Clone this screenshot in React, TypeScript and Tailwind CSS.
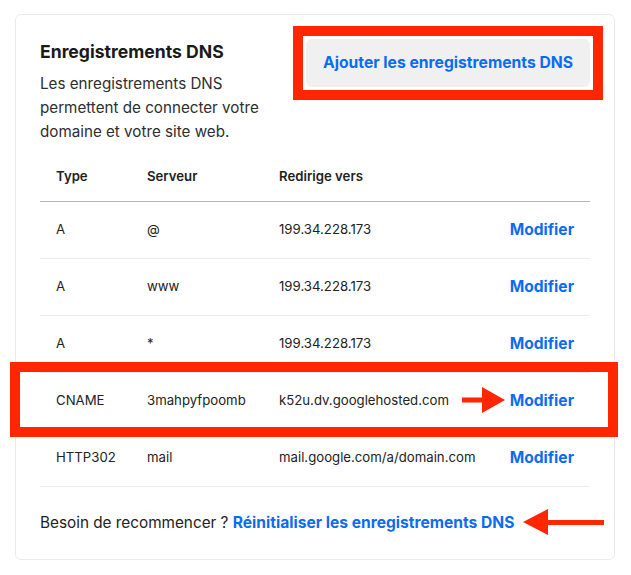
import React from "react";

const rows = [
  { type: "A", server: "@", target: "199.34.228.173" },
  { type: "A", server: "www", target: "199.34.228.173" },
  { type: "A", server: "*", target: "199.34.228.173" },
  { type: "CNAME", server: "3mahpyfpoomb", target: "k52u.dv.googlehosted.com" },
  { type: "HTTP302", server: "mail", target: "mail.google.com/a/domain.com" },
];

function ArrowRight() {
  return (
    <svg className="absolute left-[461px] top-[386px]" width="46" height="28" viewBox="0 0 46 28">
      <rect x="1" y="11.5" width="22" height="5" fill="#ff2600" />
      <polygon points="21,1 44,14 21,27" fill="#ff2600" />
    </svg>
  );
}

function ArrowLeft() {
  return (
    <svg className="absolute left-[522px] top-[508px]" width="84" height="28" viewBox="0 0 84 28">
      <polygon points="1,14 26,1 26,27" fill="#ff2600" />
      <rect x="24" y="12" width="58" height="5" fill="#ff2600" />
    </svg>
  );
}

export default function App() {
  return (
    <div
      className="relative w-[631px] h-[575px] bg-white text-[#222]"
      style={{ fontFamily: "Inter, 'Noto Sans', sans-serif" }}
    >
      <div className="absolute left-[15px] top-[14px] w-[600px] h-[546px] rounded-md border border-[#ebebeb] bg-white pt-[25px] pl-[24px] pr-[24px]">
        <div className="flex justify-between">
          <div className="w-[232px]">
            <h2 className="text-[17.6px] leading-6 font-bold text-[#1a1a1a]">Enregistrements DNS</h2>
            <p className="mt-2 text-[15.2px] leading-6 text-[#2e2e2e]">
              Les enregistrements DNS permettent de connecter votre domaine et votre site web.
            </p>
          </div>
          <button className="mt-[-1px] h-[48px] w-[284px] rounded-md bg-[#f0f0f0] text-[15.7px] font-bold text-[#0b6cf2]">
            Ajouter les enregistrements DNS
          </button>
        </div>

        <table className="mt-[9px] w-[550px] text-left text-[13.2px]">
          <thead>
            <tr className="h-[48px] border-b border-[#b5b5b5]">
              <th className="w-[91px] pl-4 font-semibold">Type</th>
              <th className="w-[132px] pl-4 font-semibold">Serveur</th>
              <th className="pl-4 font-semibold">Redirige vers</th>
              <th />
            </tr>
          </thead>
          <tbody>
            {rows.map((r) => (
              <tr key={r.type + r.server} className="h-[57px] border-b border-[#ececec] text-[#222]">
                <td className="pl-4">{r.type}</td>
                <td className="pl-4">{r.server}</td>
                <td className="pl-4">{r.target}</td>
                <td className="pr-4 text-right text-[15.6px] font-bold text-[#0b6cf2]">Modifier</td>
              </tr>
            ))}
          </tbody>
        </table>

        <p className="pt-6 text-[15.3px] leading-6 text-[#222]">
          Besoin de recommencer ?{" "}
          <span className="font-bold text-[15.6px] text-[#0b6cf2]">Réinitialiser les enregistrements DNS</span>
        </p>
      </div>

      <div className="absolute left-[293px] top-[26px] w-[310px] h-[74px] border-[10px] border-[#ff2600]" />
      <div className="absolute left-[10px] top-[362px] w-[608px] h-[75px] border-[10px] border-[#ff2600]" />
      <ArrowRight />
      <ArrowLeft />
    </div>
  );
}
